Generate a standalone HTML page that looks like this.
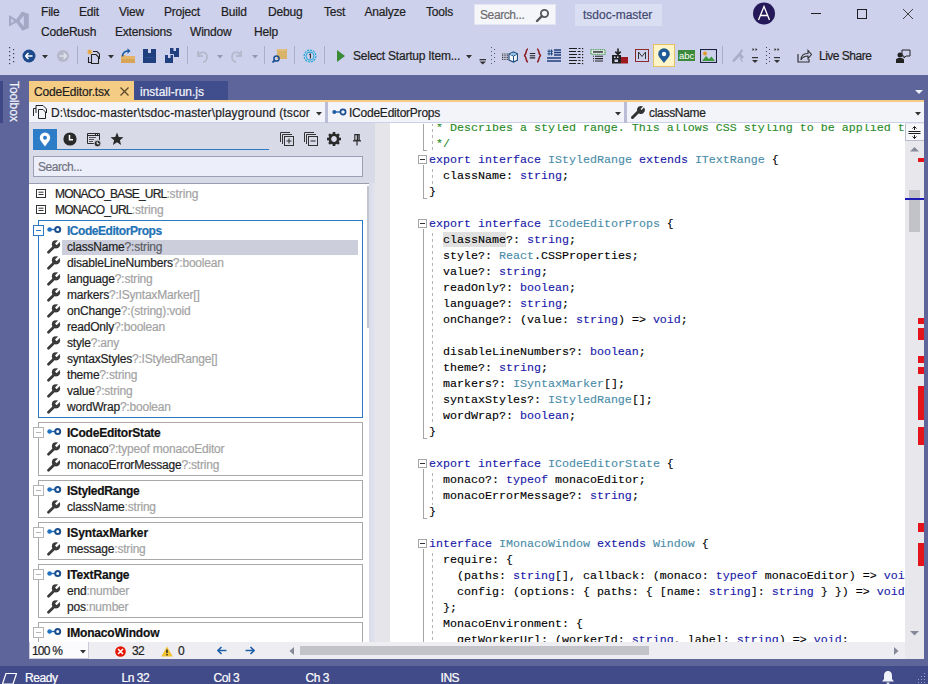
<!DOCTYPE html><html><head><meta charset="utf-8"><style>
*{margin:0;padding:0;box-sizing:border-box}
html,body{width:928px;height:684px;overflow:hidden;background:#5D659A;font-family:"Liberation Sans",sans-serif;}
.a{position:absolute}
.t{position:absolute;white-space:pre;font-size:12px;line-height:16px;letter-spacing:-0.2px;color:#1E1E1E;-webkit-text-stroke:0.2px currentColor}
.m{position:absolute;white-space:pre;font-family:"Liberation Mono",monospace;font-size:11.667px;line-height:16px;color:#000;-webkit-text-stroke:0.12px currentColor}
.kw{color:#1818A8}.ty{color:#4A8CA8}.cm{color:#2A8A2A}
.gr{color:#A3A3A3}
</style></head><body>
<svg width="0" height="0" style="position:absolute"><defs><mask id="wm" maskUnits="userSpaceOnUse" x="0" y="0" width="14" height="14"><rect width="14" height="14" fill="#fff"/><path d="M8.8 4.4 L14 -0.8" stroke="#000" stroke-width="2.3"/></mask></defs></svg>
<div class="a" style="left:0px;top:0px;width:928px;height:75px;background:#CDD1EC"></div>
<svg class="a" style="left:0px;top:0px" width="34" height="36" viewBox="0 0 34 36"><path d="M9 15 L16.3 19.6 L22 11.4 L28.8 13.9 V27.9 L22.4 30.7 L16.3 22.6 L9 26.6 Z M11.2 18.6 V23.2 L14.2 21 Z M23.8 15.8 V26.2 L19.4 21 Z" fill="#A3A8C4" fill-rule="evenodd"/></svg>
<div class="t" style="left:41px;top:4px;">File</div>
<div class="t" style="left:79px;top:4px;">Edit</div>
<div class="t" style="left:119px;top:4px;">View</div>
<div class="t" style="left:164px;top:4px;">Project</div>
<div class="t" style="left:221px;top:4px;">Build</div>
<div class="t" style="left:268px;top:4px;">Debug</div>
<div class="t" style="left:324px;top:4px;">Test</div>
<div class="t" style="left:364.5px;top:4px;">Analyze</div>
<div class="t" style="left:426px;top:4px;">Tools</div>
<div class="t" style="left:41px;top:24px;">CodeRush</div>
<div class="t" style="left:115px;top:24px;">Extensions</div>
<div class="t" style="left:190px;top:24px;">Window</div>
<div class="t" style="left:254px;top:24px;">Help</div>
<div class="a" style="left:474px;top:4px;width:82px;height:21px;background:#F5F6FA;border:1px solid #E3E6F2"></div>
<div class="t" style="left:480px;top:6.5px;color:#6D6D70;letter-spacing:-0.4px">Search...</div>
<svg class="a" style="left:535px;top:8px" width="15" height="15" viewBox="0 0 15 15"><circle cx="9.5" cy="5.5" r="3.6" fill="none" stroke="#555" stroke-width="1.8"/><path d="M7 8 L2 13" stroke="#555" stroke-width="2.4" stroke-linecap="round"/></svg>
<div class="a" style="left:575px;top:4px;width:87px;height:22px;background:#D9DEF2"></div>
<div class="t" style="left:583px;top:6.5px;color:#424870;letter-spacing:0px">tsdoc-master</div>
<svg class="a" style="left:752px;top:2px" width="24" height="23" viewBox="0 0 24 23"><circle cx="12" cy="11.5" r="11" fill="#26195A"/><path d="M6.5 18 L12 4.5 L17.5 18 M8.3 13.5 H15.7" stroke="#fff" stroke-width="1.3" fill="none"/></svg>
<div class="a" style="left:811px;top:13px;width:10px;height:1px;background:#1E1E1E"></div>
<div class="a" style="left:857px;top:9px;width:10px;height:10px;border:1px solid #1E1E1E"></div>
<svg class="a" style="left:902px;top:8px" width="12" height="12" viewBox="0 0 12 12"><path d="M1 1 L11 11 M11 1 L1 11" stroke="#333" stroke-width="0.9"/></svg>
<svg class="a" style="left:8px;top:46px" width="7" height="19" viewBox="0 0 7 19"><rect x="1" y="1" width="1.2" height="1.2" fill="#3A3F5E"/><rect x="5" y="3" width="1.2" height="1.2" fill="#3A3F5E"/><rect x="1" y="5" width="1.2" height="1.2" fill="#3A3F5E"/><rect x="5" y="7" width="1.2" height="1.2" fill="#3A3F5E"/><rect x="1" y="9" width="1.2" height="1.2" fill="#3A3F5E"/><rect x="5" y="11" width="1.2" height="1.2" fill="#3A3F5E"/><rect x="1" y="13" width="1.2" height="1.2" fill="#3A3F5E"/><rect x="5" y="15" width="1.2" height="1.2" fill="#3A3F5E"/><rect x="1" y="17" width="1.2" height="1.2" fill="#3A3F5E"/></svg>
<svg class="a" style="left:22px;top:49px" width="14" height="14" viewBox="0 0 14 14"><circle cx="7" cy="7" r="6.5" fill="#1C4A8A"/><path d="M3.5 7 H10.5 M3.5 7 L6.5 4 M3.5 7 L6.5 10" stroke="#fff" stroke-width="1.6" fill="none"/></svg>
<svg class="a" style="left:42px;top:55px" width="6" height="4" viewBox="0 0 6 4"><path d="M0 0 H6 L3 3.5 Z" fill="#333"/></svg>
<svg class="a" style="left:56px;top:49px" width="14" height="14" viewBox="0 0 14 14"><circle cx="7" cy="7" r="6" fill="#B4B8C8"/><path d="M10.5 7 H3.5 M10.5 7 L7.5 4 M10.5 7 L7.5 10" stroke="#E0E3EE" stroke-width="1.5" fill="none"/></svg>
<div class="a" style="left:77px;top:46px;width:1px;height:18px;background:#A9AFC7"></div>
<svg class="a" style="left:86px;top:48px" width="14" height="16" viewBox="0 0 14 16"><path d="M2.5 9 V14.5 H5" fill="none" stroke="#222" stroke-width="1.1"/><path d="M7 3.5 H11 L13.5 6 V11" fill="none" stroke="#222" stroke-width="1.1"/><path d="M5.5 6.5 H10 L12.5 9 V15.5 H5.5 Z" fill="#CDD1EC" stroke="#222" stroke-width="1.1"/><path d="M3.5 0.5 L4.2 2.4 L6.2 1.6 L5.2 3.5 L7 4.5 L5 5 L5.2 7 L3.8 5.6 L2.2 7 L2.5 5 L0.5 4.5 L2.4 3.5 L1.5 1.6 L3.3 2.4 Z" fill="#E8A33A"/></svg>
<svg class="a" style="left:108px;top:55px" width="6" height="4" viewBox="0 0 6 4"><path d="M0 0 H6 L3 3.5 Z" fill="#333"/></svg>
<svg class="a" style="left:120px;top:48px" width="16" height="16" viewBox="0 0 16 16"><path d="M1 7 H5 L6 8 H15 V15 H1 Z" fill="#E3B56A"/><path d="M1 11 H15 V15 H1 Z" fill="#D4A050" opacity="0.8"/><path d="M2.5 8.5 C2.5 4.5 5 3 8.5 3" stroke="#1B5AA0" stroke-width="1.6" fill="none"/><path d="M7.5 0.3 L10.5 3 L7.5 5.7 Z" fill="#1B5AA0"/></svg>
<svg class="a" style="left:143px;top:49px" width="13" height="14" viewBox="0 0 13 14"><path d="M0 0 H13 V14 H0 Z" fill="#1F3F7E"/><rect x="5" y="0" width="3" height="4" fill="#CDD1EC"/><rect x="2" y="8" width="9" height="1" fill="#2B4F92"/></svg>
<svg class="a" style="left:164px;top:48px" width="16" height="16" viewBox="0 0 16 16"><path d="M6 0 H15 V9 H6 Z" fill="#1F3F7E"/><rect x="9.5" y="0" width="2.5" height="3" fill="#CDD1EC"/><path d="M0.5 6.5 H9.5 V15.5 H0.5 Z" fill="#1F3F7E" stroke="#CDD1EC" stroke-width="1"/><rect x="4" y="7" width="2.5" height="3" fill="#CDD1EC"/></svg>
<div class="a" style="left:187px;top:46px;width:1px;height:18px;background:#A9AFC7"></div>
<svg class="a" style="left:195px;top:48px" width="14" height="15" viewBox="0 0 14 15"><path d="M3 3 V8 H8" stroke="#B4B9CB" stroke-width="1.8" fill="none"/><path d="M3 8 C5 3 12 3 12 9 C12 12 10 14 8 14" stroke="#B4B9CB" stroke-width="1.8" fill="none"/></svg>
<svg class="a" style="left:217px;top:55px" width="6" height="4" viewBox="0 0 6 4"><path d="M0 0 H6 L3 3.5 Z" fill="#9499AD"/></svg>
<svg class="a" style="left:230px;top:48px" width="14" height="15" viewBox="0 0 14 15"><path d="M11 3 V8 H6" stroke="#B4B9CB" stroke-width="1.8" fill="none"/><path d="M11 8 C9 3 2 3 2 9 C2 12 4 14 6 14" stroke="#B4B9CB" stroke-width="1.8" fill="none"/></svg>
<svg class="a" style="left:252px;top:55px" width="6" height="4" viewBox="0 0 6 4"><path d="M0 0 H6 L3 3.5 Z" fill="#9499AD"/></svg>
<div class="a" style="left:264px;top:46px;width:1px;height:18px;background:#A9AFC7"></div>
<svg class="a" style="left:272px;top:48px" width="16" height="15" viewBox="0 0 16 15"><path d="M5 1 H15 V11 H5 Z" fill="#D9B36A"/><path d="M4 2 H14" stroke="#E8C98A"/><circle cx="4.5" cy="10.5" r="2.6" fill="none" stroke="#1B4F8F" stroke-width="1.5"/><path d="M2.7 12.3 L0.5 14.5" stroke="#1B4F8F" stroke-width="1.8"/></svg>
<div class="a" style="left:294px;top:46px;width:1px;height:18px;background:#A9AFC7"></div>
<svg class="a" style="left:303px;top:49px" width="14" height="14" viewBox="0 0 14 14"><circle cx="7" cy="7" r="5.9" fill="none" stroke="#2AA8D8" stroke-width="1.2" stroke-dasharray="2.2 0.8"/><circle cx="7" cy="7" r="3.9" fill="none" stroke="#2AA8D8" stroke-width="1.1"/><path d="M6.2 5.6 L7.4 4.8 V9.4" stroke="#1E1E1E" stroke-width="1" fill="none"/></svg>
<div class="a" style="left:324px;top:46px;width:1px;height:18px;background:#A9AFC7"></div>
<svg class="a" style="left:337px;top:50px" width="8" height="12" viewBox="0 0 8 12"><path d="M0 0 L8 6 L0 12 Z" fill="#388A34"/></svg>
<div class="t" style="left:353px;top:48px;letter-spacing:-0.23px">Select Startup Item...</div>
<svg class="a" style="left:466px;top:55px" width="6" height="4" viewBox="0 0 6 4"><path d="M0 0 H6 L3 3.5 Z" fill="#333"/></svg>
<svg class="a" style="left:479px;top:58px" width="8" height="7" viewBox="0 0 8 7"><rect x="0.5" y="1" width="6.5" height="1.3" fill="#333"/><path d="M0.5 3.5 H7 L3.75 6.5 Z" fill="#333"/></svg>
<svg class="a" style="left:490px;top:46px" width="6" height="19" viewBox="0 0 6 19"><rect x="1" y="1" width="1" height="1" fill="#50567A"/><rect x="4" y="3" width="1" height="1" fill="#50567A"/><rect x="1" y="5" width="1" height="1" fill="#50567A"/><rect x="4" y="7" width="1" height="1" fill="#50567A"/><rect x="1" y="9" width="1" height="1" fill="#50567A"/><rect x="4" y="11" width="1" height="1" fill="#50567A"/><rect x="1" y="13" width="1" height="1" fill="#50567A"/><rect x="4" y="15" width="1" height="1" fill="#50567A"/><rect x="1" y="17" width="1" height="1" fill="#50567A"/></svg>
<svg class="a" style="left:501px;top:51px" width="17" height="12" viewBox="0 0 17 12"><rect x="1.0" y="2.5" width="1" height="1" fill="#333"/><rect x="1.0" y="4.3" width="1" height="1" fill="#333"/><rect x="1.0" y="6.1" width="1" height="1" fill="#333"/><rect x="1.0" y="7.9" width="1" height="1" fill="#333"/><rect x="2.7" y="2.5" width="1" height="1" fill="#333"/><rect x="2.7" y="4.3" width="1" height="1" fill="#333"/><rect x="2.7" y="6.1" width="1" height="1" fill="#333"/><rect x="2.7" y="7.9" width="1" height="1" fill="#333"/><rect x="4.4" y="2.5" width="1" height="1" fill="#333"/><rect x="4.4" y="4.3" width="1" height="1" fill="#333"/><rect x="4.4" y="6.1" width="1" height="1" fill="#333"/><rect x="4.4" y="7.9" width="1" height="1" fill="#333"/><rect x="6.1" y="2.5" width="1" height="1" fill="#333"/><rect x="6.1" y="4.3" width="1" height="1" fill="#333"/><rect x="6.1" y="6.1" width="1" height="1" fill="#333"/><rect x="6.1" y="7.9" width="1" height="1" fill="#333"/><path d="M8 3 L12.5 1 L16.5 3 V9 L12.5 11 L8 9 Z" fill="#F4F7FC" stroke="#23507E" stroke-width="1.2"/><path d="M8 3 L12.5 5 L16.5 3 M12.5 5 V11" stroke="#23507E" stroke-width="1" fill="none"/><path d="M8.6 3.2 L12.5 1.6 L15.9 3.2 L12.5 4.6 Z" fill="#8FC3E8"/></svg>
<svg class="a" style="left:523px;top:48px" width="19" height="15" viewBox="0 0 19 15"><path d="M5 1 C2.5 1 3.8 7 1 7.5 C3.8 8 2.5 14 5 14 M14 1 C16.5 1 15.2 7 18 7.5 C15.2 8 16.5 14 14 14" stroke="#8E1C22" stroke-width="1.5" fill="none"/><path d="M6.8 5.5 H12.2 M6.8 7.7 H12.2 M6.8 9.9 H12.2" stroke="#222" stroke-width="1.1"/></svg>
<svg class="a" style="left:547px;top:49px" width="14" height="14" viewBox="0 0 14 14"><path d="M2 0.5 V6.5 M4.5 0.5 V6.5 M0.5 2.2 H6 M0.5 4.8 H6" stroke="#1E4A86" stroke-width="1"/><path d="M7 1 H14 M7 3.5 H14 M7 6 H14 M0 9 H14 M0 12 H14" stroke="#1E3F7E" stroke-width="1.3"/></svg>
<svg class="a" style="left:569px;top:47px" width="15" height="18" viewBox="0 0 15 18"><path d="M0 1.5 H8 M9.5 1.5 H11.5" stroke="#1E1E1E" stroke-width="1.2"/><rect x="13" y="1" width="1.2" height="1.2" fill="#1E1E1E"/><path d="M0 4.5 H7 M8.5 4.5 H11.5" stroke="#1E1E1E" stroke-width="1.2"/><rect x="13" y="4" width="1.2" height="1.2" fill="#1E1E1E"/><path d="M0 7.5 H8 M9.5 7.5 H11.5" stroke="#1E1E1E" stroke-width="1.2"/><rect x="13" y="7" width="1.2" height="1.2" fill="#1E1E1E"/><path d="M0 10.5 H7 M8.5 10.5 H11.5" stroke="#1E1E1E" stroke-width="1.2"/><rect x="13" y="10" width="1.2" height="1.2" fill="#1E1E1E"/><path d="M0 13.5 H8 M9.5 13.5 H11.5" stroke="#1E1E1E" stroke-width="1.2"/><rect x="13" y="13" width="1.2" height="1.2" fill="#1E1E1E"/><path d="M0 16.5 H7 M8.5 16.5 H11.5" stroke="#1E1E1E" stroke-width="1.2"/><rect x="13" y="16" width="1.2" height="1.2" fill="#1E1E1E"/></svg>
<svg class="a" style="left:590px;top:49px" width="16" height="15" viewBox="0 0 16 15"><rect x="1" y="0.8" width="14" height="4.4" fill="#E9EEF2" stroke="#3C9A3C" stroke-width="1.1" stroke-dasharray="1.2 0.6"/><rect x="3" y="2.2" width="10" height="1.5" fill="#333"/><path d="M5 7.2 H13 M5 9.6 H13 M5 12 H13" stroke="#222" stroke-width="1.1"/><path d="M3 7.2 H4 M3 9.6 H4 M3 12 H4" stroke="#222" stroke-width="1.1"/></svg>
<svg class="a" style="left:611px;top:48px" width="18" height="16" viewBox="0 0 18 16"><path d="M7 0.5 V6 M4.3 3.6 L7 6.4 L9.7 3.6" stroke="#222" stroke-width="1.6" fill="none"/><path d="M1 7 H10 V15.5 H1 Z" fill="#222"/><rect x="3" y="8.5" width="1.5" height="1.5" fill="#CDD1EC"/><rect x="6" y="8.5" width="1.5" height="1.5" fill="#CDD1EC"/><rect x="3.5" y="11.5" width="3.5" height="2.5" fill="#CDD1EC"/><rect x="10" y="9" width="7" height="6.5" fill="#9E1A20"/></svg>
<svg class="a" style="left:635px;top:49px" width="14" height="13" viewBox="0 0 14 13"><rect x="0.5" y="0.5" width="13" height="12" fill="none" stroke="#8A2A2A" stroke-width="1"/><path d="M3.5 10 V3 L7 7.5 L10.5 3 V10" stroke="#333" stroke-width="1" fill="none"/></svg>
<div class="a" style="left:653px;top:44px;width:22px;height:23px;background:#FDF4C8;border:1px solid #E5C365"></div>
<svg class="a" style="left:657px;top:48px" width="14" height="16" viewBox="0 0 14 16"><path d="M7 15 C4 11 1.2 8.5 1.2 6 A5.8 5.8 0 0 1 12.8 6 C12.8 8.5 10 11 7 15 Z" fill="#1F5A96"/><circle cx="7" cy="6" r="2.2" fill="#fff"/></svg>
<svg class="a" style="left:678px;top:50px" width="17" height="11" viewBox="0 0 17 11"><rect width="17" height="11" fill="#3A8A3A"/><text x="1" y="9" font-family="Liberation Sans" font-size="9.5" fill="#fff">abc</text></svg>
<svg class="a" style="left:700px;top:49px" width="17" height="14" viewBox="0 0 17 14"><rect x="0.5" y="0.5" width="16" height="13" fill="none" stroke="#1E2040" stroke-width="1.1"/><circle cx="5" cy="4.5" r="2" fill="#E39B2D"/><path d="M2 12 L6 7 L9 10 L11.5 7.5 L15 12 Z" fill="#3C9A3C"/></svg>
<div class="a" style="left:722px;top:46px;width:1px;height:18px;background:#A9AFC7"></div>
<svg class="a" style="left:731px;top:48px" width="15" height="16" viewBox="0 0 15 16"><path d="M1 13 L5 8 L8 5 L10.5 1 L12 2.5 L10 6 L13 9 L11 11 L8.5 8.5 L6 11 L3 14 Z" fill="#A9ADC8"/><path d="M9 10 L11.5 14" stroke="#A9ADC8" stroke-width="1.2"/></svg>
<svg class="a" style="left:752px;top:48px" width="6" height="16" viewBox="0 0 6 16"><path d="M0.5 0 V3 L2.5 1.5 Z M3.5 0 V3 L5.5 1.5 Z" fill="#333"/><rect x="0" y="9" width="6" height="1.2" fill="#333"/><path d="M0 12 H6 L3 15 Z" fill="#333"/></svg>
<svg class="a" style="left:765px;top:46px" width="7" height="19" viewBox="0 0 7 19"><rect x="1" y="1" width="1" height="1" fill="#3A3F5E"/><rect x="4" y="3" width="1" height="1" fill="#3A3F5E"/><rect x="1" y="5" width="1" height="1" fill="#3A3F5E"/><rect x="4" y="7" width="1" height="1" fill="#3A3F5E"/><rect x="1" y="9" width="1" height="1" fill="#3A3F5E"/><rect x="4" y="11" width="1" height="1" fill="#3A3F5E"/><rect x="1" y="13" width="1" height="1" fill="#3A3F5E"/><rect x="4" y="15" width="1" height="1" fill="#3A3F5E"/><rect x="1" y="17" width="1" height="1" fill="#3A3F5E"/></svg>
<svg class="a" style="left:774px;top:48px" width="6" height="16" viewBox="0 0 6 16"><path d="M0.5 0 V3 L2.5 1.5 Z M3.5 0 V3 L5.5 1.5 Z" fill="#333"/><rect x="0" y="9" width="6" height="1.2" fill="#333"/><path d="M0 12 H6 L3 15 Z" fill="#333"/></svg>
<svg class="a" style="left:797px;top:49px" width="15" height="14" viewBox="0 0 15 14"><path d="M1 5 V13 H12 V10" stroke="#333" stroke-width="1.2" fill="none"/><path d="M4 11 C4 6 7 4.5 11 4.5 V1.5 L14.5 5.5 L11 9.5 V7 C8 7 5.5 8 4 11 Z" fill="none" stroke="#333" stroke-width="1.1"/></svg>
<div class="t" style="left:819px;top:48px;letter-spacing:-0.5px">Live Share</div>
<svg class="a" style="left:896px;top:49px" width="15" height="14" viewBox="0 0 15 14"><circle cx="4" cy="6" r="2.5" fill="#222"/><path d="M0 14 V11 C0 9.5 1.5 9 4 9 C6.5 9 8 9.5 8 11 V14 Z" fill="#222"/><path d="M6 1 H14 V7 H10 L8 9 V7 H6 Z" fill="none" stroke="#222" stroke-width="1"/></svg>
<div class="a" style="left:0px;top:81px;width:3px;height:42px;background:#3F4886"></div>
<div class="t" style="left:8px;top:81px;width:42px;height:14px;line-height:14px;color:#F0F2FA;transform-origin:0 0;transform:translate(13px,0) rotate(90deg);letter-spacing:-0.1px">Toolbox</div>
<div class="a" style="left:29px;top:81px;width:105px;height:21px;background:#F5CC84"></div>
<div class="t" style="left:34px;top:83.5px;color:#1E1E1E;letter-spacing:-0.17px">CodeEditor.tsx</div>
<svg class="a" style="left:120px;top:87px" width="9" height="9" viewBox="0 0 9 9"><path d="M0.5 0.5 L8.5 8.5 M8.5 0.5 L0.5 8.5" stroke="#5B4A2A" stroke-width="1.3"/></svg>
<div class="a" style="left:134px;top:81px;width:94px;height:20px;background:#404E8E"></div>
<div class="t" style="left:140px;top:83.5px;color:#F2F4FA;letter-spacing:0px">install-run.js</div>
<div class="a" style="left:29px;top:100px;width:895px;height:2px;background:#F5CC84"></div>
<svg class="a" style="left:915px;top:90px" width="8" height="5" viewBox="0 0 8 5"><path d="M0 0 H8 L4 4 Z" fill="#F0F2FA"/></svg>
<div class="a" style="left:29px;top:102px;width:895px;height:21px;background:#F3F4F9"></div>
<div class="a" style="left:29px;top:122px;width:895px;height:1px;background:#CDD0EA"></div>
<div class="a" style="left:29px;top:123px;width:895px;height:1px;background:#B4B7DA"></div>
<svg class="a" style="left:33px;top:105px" width="15" height="15" viewBox="0 0 15 15"><path d="M0.5 11 V3.5 H3" fill="none" stroke="#222" stroke-width="1"/><path d="M3 8 V0.5 H10 L13.5 4 V8" fill="none" stroke="#222" stroke-width="1"/><path d="M5.5 4.5 H10 L12.5 7 V13.5 H5.5 Z" fill="#F3F4F9" stroke="#222" stroke-width="1"/></svg>
<div class="t" style="left:51px;top:105px;letter-spacing:0.12px">D:\tsdoc-master\tsdoc-master\playground (tscor</div>
<svg class="a" style="left:316px;top:112px" width="6" height="4" viewBox="0 0 6 4"><path d="M0 0 H6 L3 3.5 Z" fill="#333"/></svg>
<div class="a" style="left:325px;top:102px;width:3px;height:21px;background:#B9BED6"></div>
<svg class="a" style="left:332px;top:107px" width="15" height="10" viewBox="0 0 15 10"><circle cx="2.3" cy="5" r="2" fill="#1F5FA8"/><path d="M4 5 H8.5" stroke="#1F5FA8" stroke-width="1.4"/><circle cx="11" cy="5" r="2.6" fill="none" stroke="#1B4E8C" stroke-width="1.7"/></svg>
<div class="t" style="left:349px;top:105px;letter-spacing:-0.23px">ICodeEditorProps</div>
<svg class="a" style="left:615px;top:112px" width="6" height="4" viewBox="0 0 6 4"><path d="M0 0 H6 L3 3.5 Z" fill="#333"/></svg>
<div class="a" style="left:624px;top:102px;width:3px;height:21px;background:#B9BED6"></div>
<svg class="a" style="left:631px;top:105px" width="14" height="14" viewBox="0 0 14 14"><path d="M1.5 12.5 L7 7" stroke="#333" stroke-width="3" stroke-linecap="round"/><path d="M6 5.5 A4 4 0 0 1 12 1.5 L9.5 4 L10.5 5 L13 2.5 A4 4 0 0 1 8 8.5 Z" fill="#333"/></svg>
<div class="t" style="left:649px;top:105px;letter-spacing:-0.3px">className</div>
<svg class="a" style="left:915px;top:112px" width="6" height="4" viewBox="0 0 6 4"><path d="M0 0 H6 L3 3.5 Z" fill="#333"/></svg>
<div class="a" style="left:29px;top:123px;width:346px;height:519px;background:#D8DAE8"></div>
<div class="a" style="left:33px;top:129px;width:24px;height:21px;background:#2D7CC8"></div>
<svg class="a" style="left:39px;top:132px" width="12" height="15" viewBox="0 0 12 15"><path d="M6 14.5 C3.5 11 0.8 8.5 0.8 5.8 A5.2 5.2 0 0 1 11.2 5.8 C11.2 8.5 8.5 11 6 14.5 Z" fill="#fff"/><circle cx="6" cy="5.8" r="2" fill="#2D7CC8"/></svg>
<div class="a" style="left:33px;top:149px;width:236px;height:1px;background:#2A7BC2"></div>
<svg class="a" style="left:63px;top:132px" width="14" height="14" viewBox="0 0 14 14"><circle cx="7" cy="7" r="6.6" fill="#2A2A2A"/><path d="M6.5 3 V7.8 H10" stroke="#fff" stroke-width="1.5" fill="none"/></svg>
<svg class="a" style="left:86px;top:132px" width="15" height="15" viewBox="0 0 15 15"><path d="M1.5 1.5 H13.5 V8 M1.5 1.5 V11.5 H8" fill="none" stroke="#2A2A2A" stroke-width="1"/><path d="M1.5 3.5 H13.5" stroke="#2A2A2A" stroke-width="1"/><rect x="9" y="2" width="1" height="1" fill="#2A2A2A"/><rect x="11" y="2" width="1" height="1" fill="#2A2A2A"/><path d="M3 5.5 H10 M3 7.5 H8 M3 9.5 H7" stroke="#555" stroke-width="1"/><circle cx="11.5" cy="11.5" r="3.3" fill="#2A2A2A" stroke="#D8DAE8" stroke-width="0.8"/><path d="M11.2 9.6 V11.8 H13.2" stroke="#fff" stroke-width="1" fill="none"/></svg>
<svg class="a" style="left:110px;top:132px" width="14" height="14" viewBox="0 0 14 14"><path d="M7 0.5 L8.8 5 L13.5 5.2 L9.9 8.2 L11.1 13 L7 10.3 L2.9 13 L4.1 8.2 L0.5 5.2 L5.2 5 Z" fill="#2A2A2A"/></svg>
<svg class="a" style="left:280px;top:132px" width="14" height="14" viewBox="0 0 14 14"><path d="M0.5 10 V0.5 H10 M2.5 12 V2.5 H12" stroke="#333" stroke-width="1" fill="none"/><rect x="4.5" y="4.5" width="9" height="9" fill="#D8DAE8" stroke="#333" stroke-width="1"/><path d="M6.5 9 H11.5 M9 6.5 V11.5" stroke="#333" stroke-width="1.1"/></svg>
<svg class="a" style="left:304px;top:132px" width="14" height="14" viewBox="0 0 14 14"><path d="M0.5 10 V0.5 H10 M2.5 12 V2.5 H12" stroke="#333" stroke-width="1" fill="none"/><rect x="4.5" y="4.5" width="9" height="9" fill="#D8DAE8" stroke="#333" stroke-width="1"/><path d="M6.5 9 H11.5" stroke="#333" stroke-width="1.1"/></svg>
<svg class="a" style="left:327px;top:132px" width="14" height="14" viewBox="0 0 14 14"><g transform="translate(7 7)"><circle r="4.2" fill="none" stroke="#2A2A2A" stroke-width="2.6"/><rect x="-1.3" y="-7" width="2.6" height="3.2" fill="#2A2A2A" transform="rotate(0)"/><rect x="-1.3" y="-7" width="2.6" height="3.2" fill="#2A2A2A" transform="rotate(45)"/><rect x="-1.3" y="-7" width="2.6" height="3.2" fill="#2A2A2A" transform="rotate(90)"/><rect x="-1.3" y="-7" width="2.6" height="3.2" fill="#2A2A2A" transform="rotate(135)"/><rect x="-1.3" y="-7" width="2.6" height="3.2" fill="#2A2A2A" transform="rotate(180)"/><rect x="-1.3" y="-7" width="2.6" height="3.2" fill="#2A2A2A" transform="rotate(225)"/><rect x="-1.3" y="-7" width="2.6" height="3.2" fill="#2A2A2A" transform="rotate(270)"/><rect x="-1.3" y="-7" width="2.6" height="3.2" fill="#2A2A2A" transform="rotate(315)"/></g></svg>
<svg class="a" style="left:353px;top:134px" width="8" height="12" viewBox="0 0 8 12"><path d="M1.8 0.6 H6.2 V6.2 H1.8 Z" fill="none" stroke="#2A2A2A" stroke-width="1.1"/><rect x="3.8" y="1" width="1.6" height="5" fill="#2A2A2A"/><path d="M0 6.8 H8" stroke="#2A2A2A" stroke-width="1.3"/><path d="M4 7 V11.5" stroke="#2A2A2A" stroke-width="1.2"/></svg>
<div class="a" style="left:33px;top:156px;width:330px;height:21px;background:#ECEEFA;border:1px solid #9C9FB2"></div>
<div class="t" style="left:38px;top:159px;color:#717380;letter-spacing:-0.45px">Search...</div>
<div class="a" style="left:29px;top:183px;width:341px;height:459px;background:#FFFFFF"></div>
<div class="a" style="left:29px;top:183px;width:341px;height:1px;background:#9A9DAE"></div>
<div class="a" style="left:367px;top:186px;width:2px;height:142px;background:#C2C4CE"></div>
<div class="a" style="left:369px;top:183px;width:6px;height:459px;background:linear-gradient(90deg,#D9DCEC,#E2E3EC)"></div>
<svg class="a" style="left:36px;top:189px" width="10" height="9" viewBox="0 0 10 9"><rect x="0.5" y="0.5" width="9" height="8" fill="none" stroke="#333" stroke-width="1"/><path d="M2.5 3.2 H7.5 M2.5 5.5 H7.5" stroke="#333" stroke-width="1"/></svg>
<div class="t" style="left:55px;top:186px;letter-spacing:-0.8px">MONACO_BASE_URL<span class="gr" style="letter-spacing:-0.1px">:string</span></div>
<svg class="a" style="left:36px;top:205px" width="10" height="9" viewBox="0 0 10 9"><rect x="0.5" y="0.5" width="9" height="8" fill="none" stroke="#333" stroke-width="1"/><path d="M2.5 3.2 H7.5 M2.5 5.5 H7.5" stroke="#333" stroke-width="1"/></svg>
<div class="t" style="left:55px;top:202px;letter-spacing:-0.8px">MONACO_URL<span class="gr" style="letter-spacing:-0.1px">:string</span></div>
<div class="a" style="left:29px;top:184px;width:340px;height:458px;overflow:hidden">
<div class="a" style="left:9px;top:36px;width:325px;height:198px;border:1px solid #2B79C2"></div>
<div class="a" style="left:33px;top:56px;width:296px;height:15px;background:#CCCEDB"></div>
<div class="a" style="left:4px;top:41px;width:11px;height:11px;background:#fff;border:1px solid #2B79C2"></div>
<div class="a" style="left:7px;top:46px;width:5px;height:1px;background:#2B79C2"></div>
<svg class="a" style="left:18px;top:41px" width="15" height="9" viewBox="0 0 15 9"><circle cx="2.6" cy="4.5" r="2.3" fill="#1F6FC0"/><path d="M4 4.5 H8" stroke="#1F6FC0" stroke-width="1.4"/><circle cx="10.7" cy="4.5" r="2.5" fill="none" stroke="#1B4E8C" stroke-width="2"/></svg>
<div class="t" style="left:38px;top:39px;font-weight:bold;color:#1F72B6;letter-spacing:-0.46px">ICodeEditorProps</div>
<svg class="a" style="left:18px;top:56px" width="14" height="14" viewBox="0 0 14 14"><g mask="url(#wm)"><circle cx="9" cy="4.3" r="4.1" fill="#3A3A3A"/></g><path d="M1.5 12.3 L6.6 7.2" stroke="#3A3A3A" stroke-width="2.7" stroke-linecap="round"/></svg>
<div class="t" style="left:38px;top:55px;letter-spacing:-0.2px">className<span class="gr" style="color:#5E5E66">?:string</span></div>
<svg class="a" style="left:18px;top:72px" width="14" height="14" viewBox="0 0 14 14"><g mask="url(#wm)"><circle cx="9" cy="4.3" r="4.1" fill="#3A3A3A"/></g><path d="M1.5 12.3 L6.6 7.2" stroke="#3A3A3A" stroke-width="2.7" stroke-linecap="round"/></svg>
<div class="t" style="left:38px;top:71px;letter-spacing:-0.2px">disableLineNumbers<span class="gr" style="">?:boolean</span></div>
<svg class="a" style="left:18px;top:88px" width="14" height="14" viewBox="0 0 14 14"><g mask="url(#wm)"><circle cx="9" cy="4.3" r="4.1" fill="#3A3A3A"/></g><path d="M1.5 12.3 L6.6 7.2" stroke="#3A3A3A" stroke-width="2.7" stroke-linecap="round"/></svg>
<div class="t" style="left:38px;top:87px;letter-spacing:-0.2px">language<span class="gr" style="">?:string</span></div>
<svg class="a" style="left:18px;top:104px" width="14" height="14" viewBox="0 0 14 14"><g mask="url(#wm)"><circle cx="9" cy="4.3" r="4.1" fill="#3A3A3A"/></g><path d="M1.5 12.3 L6.6 7.2" stroke="#3A3A3A" stroke-width="2.7" stroke-linecap="round"/></svg>
<div class="t" style="left:38px;top:103px;letter-spacing:-0.2px">markers<span class="gr" style="">?:ISyntaxMarker[]</span></div>
<svg class="a" style="left:18px;top:120px" width="14" height="14" viewBox="0 0 14 14"><g mask="url(#wm)"><circle cx="9" cy="4.3" r="4.1" fill="#3A3A3A"/></g><path d="M1.5 12.3 L6.6 7.2" stroke="#3A3A3A" stroke-width="2.7" stroke-linecap="round"/></svg>
<div class="t" style="left:38px;top:119px;letter-spacing:-0.2px">onChange<span class="gr" style="">?:(string):void</span></div>
<svg class="a" style="left:18px;top:136px" width="14" height="14" viewBox="0 0 14 14"><g mask="url(#wm)"><circle cx="9" cy="4.3" r="4.1" fill="#3A3A3A"/></g><path d="M1.5 12.3 L6.6 7.2" stroke="#3A3A3A" stroke-width="2.7" stroke-linecap="round"/></svg>
<div class="t" style="left:38px;top:135px;letter-spacing:-0.2px">readOnly<span class="gr" style="">?:boolean</span></div>
<svg class="a" style="left:18px;top:152px" width="14" height="14" viewBox="0 0 14 14"><g mask="url(#wm)"><circle cx="9" cy="4.3" r="4.1" fill="#3A3A3A"/></g><path d="M1.5 12.3 L6.6 7.2" stroke="#3A3A3A" stroke-width="2.7" stroke-linecap="round"/></svg>
<div class="t" style="left:38px;top:151px;letter-spacing:-0.2px">style<span class="gr" style="">?:any</span></div>
<svg class="a" style="left:18px;top:168px" width="14" height="14" viewBox="0 0 14 14"><g mask="url(#wm)"><circle cx="9" cy="4.3" r="4.1" fill="#3A3A3A"/></g><path d="M1.5 12.3 L6.6 7.2" stroke="#3A3A3A" stroke-width="2.7" stroke-linecap="round"/></svg>
<div class="t" style="left:38px;top:167px;letter-spacing:-0.2px">syntaxStyles<span class="gr" style="">?:IStyledRange[]</span></div>
<svg class="a" style="left:18px;top:184px" width="14" height="14" viewBox="0 0 14 14"><g mask="url(#wm)"><circle cx="9" cy="4.3" r="4.1" fill="#3A3A3A"/></g><path d="M1.5 12.3 L6.6 7.2" stroke="#3A3A3A" stroke-width="2.7" stroke-linecap="round"/></svg>
<div class="t" style="left:38px;top:183px;letter-spacing:-0.2px">theme<span class="gr" style="">?:string</span></div>
<svg class="a" style="left:18px;top:200px" width="14" height="14" viewBox="0 0 14 14"><g mask="url(#wm)"><circle cx="9" cy="4.3" r="4.1" fill="#3A3A3A"/></g><path d="M1.5 12.3 L6.6 7.2" stroke="#3A3A3A" stroke-width="2.7" stroke-linecap="round"/></svg>
<div class="t" style="left:38px;top:199px;letter-spacing:-0.2px">value<span class="gr" style="">?:string</span></div>
<svg class="a" style="left:18px;top:216px" width="14" height="14" viewBox="0 0 14 14"><g mask="url(#wm)"><circle cx="9" cy="4.3" r="4.1" fill="#3A3A3A"/></g><path d="M1.5 12.3 L6.6 7.2" stroke="#3A3A3A" stroke-width="2.7" stroke-linecap="round"/></svg>
<div class="t" style="left:38px;top:215px;letter-spacing:-0.2px">wordWrap<span class="gr" style="">?:boolean</span></div>
<div class="a" style="left:9px;top:238px;width:325px;height:54px;border:1px solid #A8A8A8"></div>
<div class="a" style="left:4px;top:243px;width:11px;height:11px;background:#fff;border:1px solid #B4B4B4"></div>
<div class="a" style="left:7px;top:248px;width:5px;height:1px;background:#B4B4B4"></div>
<svg class="a" style="left:18px;top:243px" width="15" height="9" viewBox="0 0 15 9"><circle cx="2.6" cy="4.5" r="2.3" fill="#1F6FC0"/><path d="M4 4.5 H8" stroke="#1F6FC0" stroke-width="1.4"/><circle cx="10.7" cy="4.5" r="2.5" fill="none" stroke="#1B4E8C" stroke-width="2"/></svg>
<div class="t" style="left:38px;top:241px;font-weight:bold;color:#111;letter-spacing:-0.24px">ICodeEditorState</div>
<svg class="a" style="left:18px;top:258px" width="14" height="14" viewBox="0 0 14 14"><g mask="url(#wm)"><circle cx="9" cy="4.3" r="4.1" fill="#3A3A3A"/></g><path d="M1.5 12.3 L6.6 7.2" stroke="#3A3A3A" stroke-width="2.7" stroke-linecap="round"/></svg>
<div class="t" style="left:38px;top:257px;letter-spacing:-0.2px">monaco<span class="gr" style="">?:typeof monacoEditor</span></div>
<svg class="a" style="left:18px;top:274px" width="14" height="14" viewBox="0 0 14 14"><g mask="url(#wm)"><circle cx="9" cy="4.3" r="4.1" fill="#3A3A3A"/></g><path d="M1.5 12.3 L6.6 7.2" stroke="#3A3A3A" stroke-width="2.7" stroke-linecap="round"/></svg>
<div class="t" style="left:38px;top:273px;letter-spacing:-0.2px">monacoErrorMessage<span class="gr" style="">?:string</span></div>
<div class="a" style="left:9px;top:296px;width:325px;height:38px;border:1px solid #A8A8A8"></div>
<div class="a" style="left:4px;top:301px;width:11px;height:11px;background:#fff;border:1px solid #B4B4B4"></div>
<div class="a" style="left:7px;top:306px;width:5px;height:1px;background:#B4B4B4"></div>
<svg class="a" style="left:18px;top:301px" width="15" height="9" viewBox="0 0 15 9"><circle cx="2.6" cy="4.5" r="2.3" fill="#1F6FC0"/><path d="M4 4.5 H8" stroke="#1F6FC0" stroke-width="1.4"/><circle cx="10.7" cy="4.5" r="2.5" fill="none" stroke="#1B4E8C" stroke-width="2"/></svg>
<div class="t" style="left:38px;top:299px;font-weight:bold;color:#111;letter-spacing:-0.3px">IStyledRange</div>
<svg class="a" style="left:18px;top:316px" width="14" height="14" viewBox="0 0 14 14"><g mask="url(#wm)"><circle cx="9" cy="4.3" r="4.1" fill="#3A3A3A"/></g><path d="M1.5 12.3 L6.6 7.2" stroke="#3A3A3A" stroke-width="2.7" stroke-linecap="round"/></svg>
<div class="t" style="left:38px;top:315px;letter-spacing:-0.2px">className<span class="gr" style="">:string</span></div>
<div class="a" style="left:9px;top:338px;width:325px;height:38px;border:1px solid #A8A8A8"></div>
<div class="a" style="left:4px;top:343px;width:11px;height:11px;background:#fff;border:1px solid #B4B4B4"></div>
<div class="a" style="left:7px;top:348px;width:5px;height:1px;background:#B4B4B4"></div>
<svg class="a" style="left:18px;top:343px" width="15" height="9" viewBox="0 0 15 9"><circle cx="2.6" cy="4.5" r="2.3" fill="#1F6FC0"/><path d="M4 4.5 H8" stroke="#1F6FC0" stroke-width="1.4"/><circle cx="10.7" cy="4.5" r="2.5" fill="none" stroke="#1B4E8C" stroke-width="2"/></svg>
<div class="t" style="left:38px;top:341px;font-weight:bold;color:#111;letter-spacing:-0.08px">ISyntaxMarker</div>
<svg class="a" style="left:18px;top:358px" width="14" height="14" viewBox="0 0 14 14"><g mask="url(#wm)"><circle cx="9" cy="4.3" r="4.1" fill="#3A3A3A"/></g><path d="M1.5 12.3 L6.6 7.2" stroke="#3A3A3A" stroke-width="2.7" stroke-linecap="round"/></svg>
<div class="t" style="left:38px;top:357px;letter-spacing:-0.2px">message<span class="gr" style="">:string</span></div>
<div class="a" style="left:9px;top:380px;width:325px;height:54px;border:1px solid #A8A8A8"></div>
<div class="a" style="left:4px;top:385px;width:11px;height:11px;background:#fff;border:1px solid #B4B4B4"></div>
<div class="a" style="left:7px;top:390px;width:5px;height:1px;background:#B4B4B4"></div>
<svg class="a" style="left:18px;top:385px" width="15" height="9" viewBox="0 0 15 9"><circle cx="2.6" cy="4.5" r="2.3" fill="#1F6FC0"/><path d="M4 4.5 H8" stroke="#1F6FC0" stroke-width="1.4"/><circle cx="10.7" cy="4.5" r="2.5" fill="none" stroke="#1B4E8C" stroke-width="2"/></svg>
<div class="t" style="left:38px;top:383px;font-weight:bold;color:#111;letter-spacing:-0.14px">ITextRange</div>
<svg class="a" style="left:18px;top:400px" width="14" height="14" viewBox="0 0 14 14"><g mask="url(#wm)"><circle cx="9" cy="4.3" r="4.1" fill="#3A3A3A"/></g><path d="M1.5 12.3 L6.6 7.2" stroke="#3A3A3A" stroke-width="2.7" stroke-linecap="round"/></svg>
<div class="t" style="left:38px;top:399px;letter-spacing:-0.2px">end<span class="gr" style="">:number</span></div>
<svg class="a" style="left:18px;top:416px" width="14" height="14" viewBox="0 0 14 14"><g mask="url(#wm)"><circle cx="9" cy="4.3" r="4.1" fill="#3A3A3A"/></g><path d="M1.5 12.3 L6.6 7.2" stroke="#3A3A3A" stroke-width="2.7" stroke-linecap="round"/></svg>
<div class="t" style="left:38px;top:415px;letter-spacing:-0.2px">pos<span class="gr" style="">:number</span></div>
<div class="a" style="left:9px;top:438px;width:325px;height:60px;border:1px solid #A8A8A8"></div>
<div class="a" style="left:4px;top:443px;width:11px;height:11px;background:#fff;border:1px solid #B4B4B4"></div>
<div class="a" style="left:7px;top:448px;width:5px;height:1px;background:#B4B4B4"></div>
<svg class="a" style="left:18px;top:443px" width="15" height="9" viewBox="0 0 15 9"><circle cx="2.6" cy="4.5" r="2.3" fill="#1F6FC0"/><path d="M4 4.5 H8" stroke="#1F6FC0" stroke-width="1.4"/><circle cx="10.7" cy="4.5" r="2.5" fill="none" stroke="#1B4E8C" stroke-width="2"/></svg>
<div class="t" style="left:38px;top:441px;font-weight:bold;color:#111;letter-spacing:-0.17px">IMonacoWindow</div>
</div>
<div class="a" style="left:375px;top:123px;width:15px;height:519px;background:#E6E6EA"></div>
<div class="a" style="left:390px;top:123px;width:515px;height:519px;background:#FFFFFF"></div>
<div class="a" style="left:905px;top:123px;width:19px;height:519px;background:#E8E8EC"></div>
<div class="a" style="left:924px;top:75px;width:4px;height:590px;background:#5D659A"></div>
<div class="a" style="left:390px;top:124px;width:515px;height:518px;overflow:hidden">
<div class="a" style="left:53px;top:108px;width:63px;height:15px;background:#E0E0E0"></div>
<div class="m" style="left:39px;top:-20px"><span class="cm">/**</span></div>
<div class="m" style="left:39px;top:-4px"><span class="cm"> * Describes a styled range. This allows CSS styling to be applied to text ranges.</span></div>
<div class="m" style="left:39px;top:12px"><span class="cm"> */</span></div>
<div class="m" style="left:39px;top:28px"><span class="kw">export</span> <span class="kw">interface</span> <span class="ty">IStyledRange</span> <span class="kw">extends</span> <span class="ty">ITextRange</span> {</div>
<div class="m" style="left:39px;top:44px">  className: <span class="kw">string</span>;</div>
<div class="m" style="left:39px;top:60px">}</div>
<div class="m" style="left:39px;top:92px"><span class="kw">export</span> <span class="kw">interface</span> <span class="ty">ICodeEditorProps</span> {</div>
<div class="m" style="left:39px;top:108px">  className?: <span class="kw">string</span>;</div>
<div class="m" style="left:39px;top:124px">  style?: <span class="ty">React</span>.CSSProperties;</div>
<div class="m" style="left:39px;top:140px">  value?: <span class="kw">string</span>;</div>
<div class="m" style="left:39px;top:156px">  readOnly?: <span class="kw">boolean</span>;</div>
<div class="m" style="left:39px;top:172px">  language?: <span class="kw">string</span>;</div>
<div class="m" style="left:39px;top:188px">  onChange?: (value: <span class="kw">string</span>) =&gt; <span class="kw">void</span>;</div>
<div class="m" style="left:39px;top:220px">  disableLineNumbers?: <span class="kw">boolean</span>;</div>
<div class="m" style="left:39px;top:236px">  theme?: <span class="kw">string</span>;</div>
<div class="m" style="left:39px;top:252px">  markers?: <span class="ty">ISyntaxMarker</span>[];</div>
<div class="m" style="left:39px;top:268px">  syntaxStyles?: <span class="ty">IStyledRange</span>[];</div>
<div class="m" style="left:39px;top:284px">  wordWrap?: <span class="kw">boolean</span>;</div>
<div class="m" style="left:39px;top:300px">}</div>
<div class="m" style="left:39px;top:332px"><span class="kw">export</span> <span class="kw">interface</span> <span class="ty">ICodeEditorState</span> {</div>
<div class="m" style="left:39px;top:348px">  monaco?: <span class="kw">typeof</span> monacoEditor;</div>
<div class="m" style="left:39px;top:364px">  monacoErrorMessage?: <span class="kw">string</span>;</div>
<div class="m" style="left:39px;top:380px">}</div>
<div class="m" style="left:39px;top:412px"><span class="kw">interface</span> <span class="ty">IMonacoWindow</span> <span class="kw">extends</span> <span class="ty">Window</span> {</div>
<div class="m" style="left:39px;top:428px">  require: {</div>
<div class="m" style="left:39px;top:444px">    (paths: <span class="kw">string</span>[], callback: (monaco: <span class="kw">typeof</span> monacoEditor) =&gt; <span class="kw">void</span>): <span class="kw">void</span>;</div>
<div class="m" style="left:39px;top:460px">    config: (options: { paths: { [name: <span class="kw">string</span>]: <span class="kw">string</span> } }) =&gt; <span class="kw">void</span>;</div>
<div class="m" style="left:39px;top:476px">  };</div>
<div class="m" style="left:39px;top:492px">  MonacoEnvironment: {</div>
<div class="m" style="left:39px;top:508px">    getWorkerUrl: (workerId: <span class="kw">string</span>, label: <span class="kw">string</span>) =&gt; <span class="kw">void</span>;</div>
<div class="a" style="left:33px;top:-6px;width:1px;height:33px;background:#A5A5A5"></div>
<div class="a" style="left:33px;top:26px;width:4px;height:1px;background:#A5A5A5"></div>
<div class="a" style="left:42px;top:-1px;width:1px;height:27px;background:repeating-linear-gradient(#B4B4B8 0 3px,transparent 3px 6px)"></div>
<div class="a" style="left:28px;top:31px;width:9px;height:9px;border:1px solid #A5A5A5;background:#fff"></div>
<div class="a" style="left:30px;top:35px;width:5px;height:1px;background:#333"></div>
<div class="a" style="left:33px;top:41px;width:1px;height:33px;background:#A5A5A5"></div>
<div class="a" style="left:33px;top:74px;width:4px;height:1px;background:#A5A5A5"></div>
<div class="a" style="left:42px;top:45px;width:1px;height:16px;background:repeating-linear-gradient(#B4B4B8 0 3px,transparent 3px 6px)"></div>
<div class="a" style="left:28px;top:95px;width:9px;height:9px;border:1px solid #A5A5A5;background:#fff"></div>
<div class="a" style="left:30px;top:99px;width:5px;height:1px;background:#333"></div>
<div class="a" style="left:33px;top:105px;width:1px;height:209px;background:#A5A5A5"></div>
<div class="a" style="left:33px;top:314px;width:4px;height:1px;background:#A5A5A5"></div>
<div class="a" style="left:42px;top:109px;width:1px;height:192px;background:repeating-linear-gradient(#B4B4B8 0 3px,transparent 3px 6px)"></div>
<div class="a" style="left:28px;top:335px;width:9px;height:9px;border:1px solid #A5A5A5;background:#fff"></div>
<div class="a" style="left:30px;top:339px;width:5px;height:1px;background:#333"></div>
<div class="a" style="left:33px;top:345px;width:1px;height:49px;background:#A5A5A5"></div>
<div class="a" style="left:33px;top:394px;width:4px;height:1px;background:#A5A5A5"></div>
<div class="a" style="left:42px;top:349px;width:1px;height:32px;background:repeating-linear-gradient(#B4B4B8 0 3px,transparent 3px 6px)"></div>
<div class="a" style="left:28px;top:415px;width:9px;height:9px;border:1px solid #A5A5A5;background:#fff"></div>
<div class="a" style="left:30px;top:419px;width:5px;height:1px;background:#333"></div>
<div class="a" style="left:33px;top:425px;width:1px;height:225px;background:#A5A5A5"></div>
<div class="a" style="left:33px;top:650px;width:4px;height:1px;background:#A5A5A5"></div>
<div class="a" style="left:42px;top:429px;width:1px;height:208px;background:repeating-linear-gradient(#B4B4B8 0 3px,transparent 3px 6px)"></div>
</div>
<div class="a" style="left:905px;top:124px;width:19px;height:17px;background:#F7F7FA;border-left:1px solid #B8BBCB;border-bottom:1px solid #B8BBCB"></div>
<svg class="a" style="left:908px;top:125px" width="13" height="15" viewBox="0 0 13 15"><path d="M0.5 6.5 H12.5 M0.5 8.5 H12.5" stroke="#1E1E1E" stroke-width="1"/><path d="M6.5 1.5 V5 M4.5 3.5 L6.5 1.5 L8.5 3.5 M6.5 10 V13.5 M4.5 11.5 L6.5 13.5 L8.5 11.5" stroke="#1E1E1E" stroke-width="1" fill="none"/></svg>
<svg class="a" style="left:910px;top:147px" width="9" height="5" viewBox="0 0 9 5"><path d="M0 4.5 L4.5 0 L9 4.5 Z" fill="#868999"/></svg>
<div class="a" style="left:909px;top:190px;width:11px;height:42px;background:#C2C3C9"></div>
<div class="a" style="left:905px;top:198px;width:19px;height:2px;background:#1C1CB4"></div>
<div class="a" style="left:918px;top:158px;width:6px;height:4px;background:#E3141C"></div>
<div class="a" style="left:918px;top:318px;width:6px;height:6px;background:#E3141C"></div>
<div class="a" style="left:918px;top:328px;width:6px;height:12px;background:#E3141C"></div>
<div class="a" style="left:918px;top:356px;width:6px;height:7px;background:#E3141C"></div>
<div class="a" style="left:918px;top:367px;width:6px;height:7px;background:#E3141C"></div>
<div class="a" style="left:918px;top:386px;width:6px;height:34px;background:#E3141C"></div>
<div class="a" style="left:918px;top:427px;width:6px;height:18px;background:#E3141C"></div>
<div class="a" style="left:918px;top:523px;width:6px;height:9px;background:#E3141C"></div>
<div class="a" style="left:918px;top:543px;width:6px;height:23px;background:#E3141C"></div>
<svg class="a" style="left:910px;top:631px" width="9" height="5" viewBox="0 0 9 5"><path d="M0 0 L4.5 4.5 L9 0 Z" fill="#868999"/></svg>
<div class="a" style="left:29px;top:642px;width:895px;height:17px;background:#EEEEF2"></div>
<div class="a" style="left:29px;top:642px;width:60px;height:17px;background:#FBFBFD;border:1px solid #C9CBDA;border-top:none"></div>
<div class="t" style="left:32px;top:642.5px;letter-spacing:-0.8px">100 %</div>
<svg class="a" style="left:80px;top:650px" width="6" height="4" viewBox="0 0 6 4"><path d="M0 0 H6 L3 3.5 Z" fill="#333"/></svg>
<svg class="a" style="left:115px;top:646px" width="11" height="11" viewBox="0 0 11 11"><circle cx="5.5" cy="5.5" r="5.3" fill="#E51400"/><path d="M3 3 L8 8 M8 3 L3 8" stroke="#fff" stroke-width="1.6"/></svg>
<div class="t" style="left:132px;top:642.5px;letter-spacing:-0.6px">32</div>
<svg class="a" style="left:161px;top:646px" width="12" height="11" viewBox="0 0 12 11"><path d="M6 0.5 L11.8 10.5 H0.2 Z" fill="#F2C432"/><path d="M6 3.5 V7" stroke="#222" stroke-width="1.4"/><rect x="5.3" y="8" width="1.4" height="1.4" fill="#222"/></svg>
<div class="t" style="left:178px;top:642.5px;">0</div>
<svg class="a" style="left:217px;top:646px" width="10" height="9" viewBox="0 0 10 9"><path d="M9.5 4.5 H1.5 M4.5 1 L1 4.5 L4.5 8" stroke="#1F5FA8" stroke-width="1.6" fill="none"/></svg>
<svg class="a" style="left:245px;top:646px" width="10" height="9" viewBox="0 0 10 9"><path d="M0.5 4.5 H8.5 M5.5 1 L9 4.5 L5.5 8" stroke="#1F5FA8" stroke-width="1.6" fill="none"/></svg>
<svg class="a" style="left:289px;top:647px" width="5" height="8" viewBox="0 0 5 8"><path d="M5 0 V8 L0.5 4 Z" fill="#868999"/></svg>
<div class="a" style="left:300px;top:646px;width:349px;height:9px;background:#C2C3C9"></div>
<svg class="a" style="left:894px;top:647px" width="5" height="8" viewBox="0 0 5 8"><path d="M0 0 V8 L4.5 4 Z" fill="#868999"/></svg>
<div class="a" style="left:905px;top:642px;width:19px;height:17px;background:#E8E8EC"></div>
<div class="a" style="left:0px;top:666px;width:928px;height:18px;background:#424B89"></div>
<svg class="a" style="left:2px;top:673px" width="15" height="11" viewBox="0 0 15 11"><path d="M4 0.5 H14.5 L11 11 H0.5 Z" fill="none" stroke="#fff" stroke-width="1.2"/></svg>
<div class="t" style="left:25px;top:670px;color:#FFFFFF;letter-spacing:-0.45px">Ready</div>
<div class="t" style="left:121.5px;top:670px;color:#FFFFFF;letter-spacing:-0.45px">Ln 32</div>
<div class="t" style="left:213.5px;top:670px;color:#FFFFFF;letter-spacing:-0.45px">Col 3</div>
<div class="t" style="left:305.5px;top:670px;color:#FFFFFF;letter-spacing:-0.45px">Ch 3</div>
<div class="t" style="left:440.5px;top:670px;color:#FFFFFF;letter-spacing:-0.45px">INS</div>
<svg class="a" style="left:881px;top:670px" width="14" height="14" viewBox="0 0 14 14"><path d="M7 1 C4 1 3 3.5 3 6 V9 L1 11.5 H13 L11 9 V6 C11 3.5 10 1 7 1 Z" fill="#F0F2FA"/><path d="M5.5 12.5 A1.5 1.5 0 0 0 8.5 12.5" fill="#F0F2FA"/></svg>
<svg class="a" style="left:917px;top:672px" width="9" height="12" viewBox="0 0 9 12"><rect x="7" y="1" width="1" height="1" fill="#9AA3C8"/><rect x="7" y="4" width="1" height="1" fill="#9AA3C8"/><rect x="4" y="4" width="1" height="1" fill="#9AA3C8"/><rect x="7" y="7" width="1" height="1" fill="#9AA3C8"/><rect x="4" y="7" width="1" height="1" fill="#9AA3C8"/><rect x="1" y="7" width="1" height="1" fill="#9AA3C8"/><rect x="7" y="10" width="1" height="1" fill="#9AA3C8"/><rect x="4" y="10" width="1" height="1" fill="#9AA3C8"/><rect x="1" y="10" width="1" height="1" fill="#9AA3C8"/></svg>
</body></html>
